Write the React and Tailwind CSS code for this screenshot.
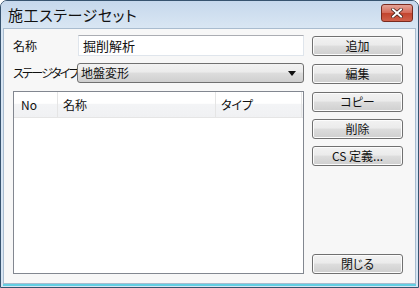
import React from "react";

const font = {
  fontFamily: '"Noto Sans CJK JP", "Noto Sans", sans-serif',
};

function Btn({ children, className = "" }) {
  return (
    <div
      className={`h-[20px] w-[91px] rounded-[3px] border border-[#707070] bg-[linear-gradient(#f2f2f2_0%,#ebebeb_45%,#dddddd_50%,#cfcfcf_100%)] shadow-[inset_0_0_0_1px_#fcfcfc] flex items-center justify-center text-[12px] leading-none text-[#111] ${className}`}
    >
      {children}
    </div>
  );
}

export default function App() {
  return (
    <div
      className="w-[419px] h-[288px] [font-feature-settings:'palt'] bg-white"
      style={font}
    >
      <div className="w-[419px] h-[288px] rounded-t-[7px] border border-[#37536f] bg-[#d7e5f3] flex flex-col overflow-hidden">
        {/* title bar */}
        <div className="h-[27px] shrink-0 flex items-center bg-[linear-gradient(#c6d8ec,#d9e6f3)] pl-[7px] pr-[5px]">
          <span className="text-[15px] text-[#111] leading-none tracking-[0.6px]">
            施工ステージセット
          </span>
          <div className="ml-auto h-[18px] w-[32px] rounded-[3px] border border-[#7a2a1e] bg-[linear-gradient(#e4a397_0%,#d56b5a_48%,#c2442e_52%,#d0604a_100%)] flex items-center justify-center -mt-[3px]">
            <svg width="12" height="10" viewBox="0 0 12 10">
              <path
                d="M2 1.5 L10 8.5 M10 1.5 L2 8.5"
                stroke="#3a1a14"
                strokeWidth="3.4"
                strokeLinecap="square"
              />
              <path
                d="M2 1.5 L10 8.5 M10 1.5 L2 8.5"
                stroke="#ffffff"
                strokeWidth="2"
                strokeLinecap="square"
              />
            </svg>
          </div>
        </div>
        {/* client */}
        <div className="flex-1 mx-[2px] mb-[1px] border-b-2 border-[#62cfe3]">
          <div className="h-full bg-[#f7f7f7] border border-[#a9bccf] flex gap-[8px] pl-[9px] pr-[9px] pt-[6px] pb-[9px]">
            {/* left column */}
            <div className="w-[291px] flex flex-col">
              <div className="h-[21px] flex items-center">
                <span className="w-[65px] text-[12px] text-[#111] leading-none">名称</span>
                <div className="w-[226px] h-[21px] bg-white border border-[#dfe5ec] border-t-[#abadb3] flex items-center pl-[4px] text-[13px] text-[#111] leading-none">
                  掘削解析
                </div>
              </div>
              <div className="h-[20px] mt-[7px] flex items-center">
                <span className="w-[64px] shrink-0 text-[12px] text-[#111] leading-none whitespace-nowrap tracking-[-1.7px]">
                  ステージタイプ
                </span>
                <div className="w-[227px] h-[20px] rounded-[3px] border border-[#707070] bg-[linear-gradient(#f2f2f2_0%,#ebebeb_45%,#dddddd_50%,#cfcfcf_100%)] flex items-center pl-[3px] pr-[7px] text-[12px] text-[#111] leading-none">
                  地盤変形
                  <svg className="ml-auto" width="8" height="5" viewBox="0 0 8 5">
                    <path d="M0 0 H8 L4 5 Z" fill="#111" />
                  </svg>
                </div>
              </div>
              <div className="mt-[8px] flex-1 bg-white border border-[#828790] flex flex-col">
                <div className="h-[26px] flex bg-[linear-gradient(#ffffff_0%,#ffffff_45%,#f3f4f6_50%,#f0f1f3_100%)] border-b border-[#e5e5e5] text-[12px] text-[#111] leading-none">
                  <div className="w-[44px] border-r border-[#e5e5e5] flex items-center pl-[7px]">No</div>
                  <div className="w-[158px] border-r border-[#e5e5e5] flex items-center pl-[5px]">名称</div>
                  <div className="w-[86px] border-r border-[#e5e5e5] flex items-center pl-[5px]">タイプ</div>
                </div>
              </div>
            </div>
            {/* right column */}
            <div className="w-[91px] flex flex-col">
              <Btn className="mt-[1px]">追加</Btn>
              <Btn className="mt-[8px]">編集</Btn>
              <Btn className="mt-[8px]">コピー</Btn>
              <Btn className="mt-[7px]">削除</Btn>
              <Btn className="mt-[7px]">CS 定義...</Btn>
              <div className="flex-1" />
              <Btn>閉じる</Btn>
            </div>
          </div>
        </div>
      </div>
    </div>
  );
}
